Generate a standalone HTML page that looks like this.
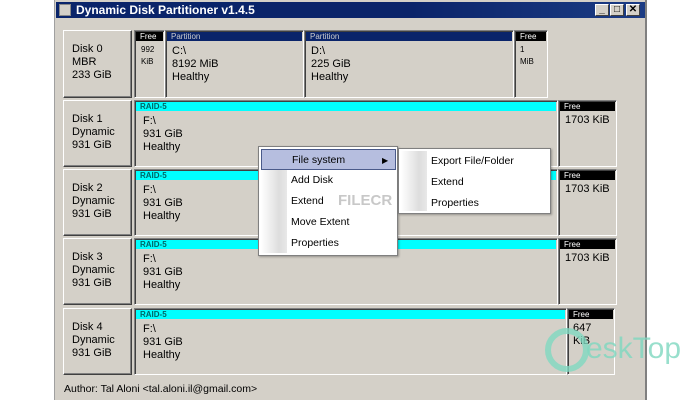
<!DOCTYPE html>
<html><head><style>
body{margin:0;width:700px;height:400px;background:#fff;position:relative;overflow:hidden;font-family:"Liberation Sans",sans-serif;font-size:11px;color:#000}
div{position:absolute;box-sizing:border-box}
.win{left:54px;top:0;width:593px;height:400px;background:#d4d0c8;border-left:1px solid #a0a0a0;border-right:2px solid #808080}
.title{left:56px;top:2px;width:589px;height:16px;background:linear-gradient(90deg,#0a246a,#0a246a 60%,#1c3c84);color:#fff;font-weight:bold;font-size:12px;line-height:16px;padding-left:20px}
.tb{top:4px;width:14px;height:12px;background:#d4d0c8;border:1px solid;border-color:#fff #404040 #404040 #fff;font-size:10px;line-height:10px;text-align:center;font-weight:bold;color:#000}
.disk{left:63px;width:69px;border:1px solid;border-color:#fff #404040 #404040 #fff;box-shadow:inset -1px -1px #808080;padding:12px 0 0 8px;line-height:13px;font-size:11px}
.p{border:1px solid;border-color:#808080 #fff #fff #808080;box-shadow:inset 1px 1px #404040;background:#d4d0c8;line-height:13px}
.h{left:1px;right:1px;top:1px;height:9px;font-size:8px;line-height:9px;padding-left:4px;font-weight:bold}
.cy{background:#0ff;color:#066}
.bk{background:#000;color:#fff;font-weight:normal}
.bl{background:#0a246a;color:#ccc;font-weight:normal}
.t{left:8px;top:14px}
.menu{background:#fff;border:1px solid #808080;box-shadow:1px 1px 2px rgba(0,0,0,.3);font-size:10.5px}
.mi{left:0;height:21px;line-height:21px;padding-left:32px;width:100%}
.strip{left:2px;top:2px;bottom:2px;width:26px;background:linear-gradient(90deg,#fff,#ddd 70%,#e8e8e8)}
</style></head><body>
<div class="win"></div>
<div class="title"><div style="left:3px;top:2px;width:12px;height:12px;background:#d4d0c8;border:1px solid #888"></div>Dynamic Disk Partitioner v1.4.5</div>
<div class="tb" style="left:595px">_</div>
<div class="tb" style="left:610px">□</div>
<div class="tb" style="left:626px">✕</div>

<div class="disk" style="top:30px;height:68px">Disk 0<br>MBR<br>233 GiB</div>
<div class="p" style="left:134px;top:30px;width:31px;height:68px"><div class="h bk">Free</div><div style="left:6px;top:13px;font-size:8px;line-height:12px">992<br>KiB</div></div>
<div class="p" style="left:165px;top:30px;width:139px;height:68px"><div class="h bl">Partition</div><div class="t" style="left:6px">C:\<br>8192 MiB<br>Healthy</div></div>
<div class="p" style="left:304px;top:30px;width:210px;height:68px"><div class="h bl">Partition</div><div class="t" style="left:6px">D:\<br>225 GiB<br>Healthy</div></div>
<div class="p" style="left:514px;top:30px;width:34px;height:68px"><div class="h bk">Free</div><div style="left:5px;top:13px;font-size:8px;line-height:12px">1<br>MiB</div></div>

<div class="disk" style="top:100px;height:67px">Disk 1<br>Dynamic<br>931 GiB</div>
<div class="p" style="left:134px;top:100px;width:424px;height:67px"><div class="h cy">RAID-5</div><div class="t">F:\<br>931 GiB<br>Healthy</div></div>
<div class="p" style="left:558px;top:100px;width:59px;height:67px"><div class="h bk">Free</div><div style="left:6px;top:13px">1703 KiB</div></div>

<div class="disk" style="top:169px;height:67px">Disk 2<br>Dynamic<br>931 GiB</div>
<div class="p" style="left:134px;top:169px;width:424px;height:67px"><div class="h cy">RAID-5</div><div class="t">F:\<br>931 GiB<br>Healthy</div></div>
<div class="p" style="left:558px;top:169px;width:59px;height:67px"><div class="h bk">Free</div><div style="left:6px;top:13px">1703 KiB</div></div>

<div class="disk" style="top:238px;height:67px">Disk 3<br>Dynamic<br>931 GiB</div>
<div class="p" style="left:134px;top:238px;width:424px;height:67px"><div class="h cy">RAID-5</div><div class="t">F:\<br>931 GiB<br>Healthy</div></div>
<div class="p" style="left:558px;top:238px;width:59px;height:67px"><div class="h bk">Free</div><div style="left:6px;top:13px">1703 KiB</div></div>

<div class="disk" style="top:308px;height:67px">Disk 4<br>Dynamic<br>931 GiB</div>
<div class="p" style="left:134px;top:308px;width:433px;height:67px"><div class="h cy">RAID-5</div><div class="t">F:\<br>931 GiB<br>Healthy</div></div>
<div class="p" style="left:567px;top:308px;width:48px;height:67px"><div class="h bk">Free</div><div style="left:5px;top:13px">647<br>KiB</div></div>

<div style="left:64px;top:383px;font-size:10.5px">Author: Tal Aloni &lt;tal.aloni.il@gmail.com&gt;</div>

<div class="menu" style="left:258px;top:146px;width:140px;height:110px"><div class="strip"></div>
<div class="mi" style="top:2px;left:2px;width:135px;background:#b6bedf;border:1px solid #4a5a8a;padding-left:30px">File system<span style="position:absolute;left:120px;font-size:8px">▶</span></div>
<div class="mi" style="top:23px">Add Disk</div>
<div class="mi" style="top:44px">Extend</div>
<div class="mi" style="top:65px">Move Extent</div>
<div class="mi" style="top:86px">Properties</div></div>
<div class="menu" style="left:398px;top:148px;width:153px;height:66px"><div class="strip"></div>
<div class="mi" style="top:2px">Export File/Folder</div>
<div class="mi" style="top:23px">Extend</div>
<div class="mi" style="top:44px">Properties</div></div>

<div style="left:338px;top:192px;color:#bbb;font-weight:bold;font-size:15px;opacity:.8">FILECR</div>
<div style="left:545px;top:328px;width:44px;height:44px;border:6px solid #7fd8c0;border-radius:50%;opacity:.8"></div>
<div style="left:586px;top:332px;color:#7fd8c0;font-size:30px;opacity:.8">eskTop</div>
</body></html>
